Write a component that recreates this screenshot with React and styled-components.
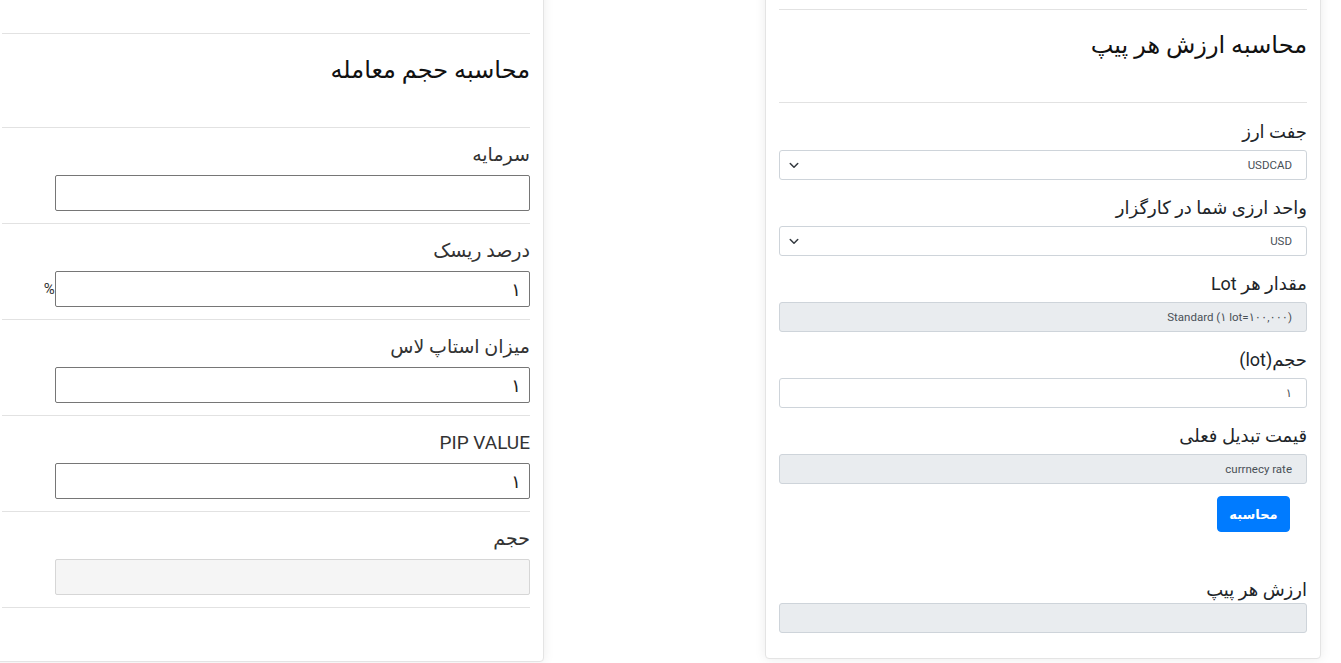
import React from "react";
import styled, { createGlobalStyle } from "styled-components";

const GlobalStyle = createGlobalStyle`
	html, body {
		margin: 0;
		padding: 0;
		background: #ffffff;
		overflow: hidden;
	}
	body {
		font-family: Roboto, "DejaVu Sans", sans-serif;
		color: #212529;
	}
	* {
		box-sizing: border-box;
	}
`;

const Page = styled.div`
	display: flow-root;
	width: 1341px;
	min-height: 663px;
	margin-left: -12px;
`;

const Columns = styled.div`
	display: flex;
	flex-direction: row;
	align-items: flex-start;
	gap: 221px;
	margin-top: -40px;
`;

const Card = styled.div`
	direction: rtl;
	width: 556px;
	padding: 0 13px ${(p) => p.$bottom}px;
	background: #ffffff;
	border: 1px solid #e4e4e4;
	border-radius: 4px;
	box-shadow: 0 0 12px rgba(0, 0, 0, 0.08);
`;

const Spacer = styled.div`
	height: ${(p) => p.$h}px;
	border-bottom: 1px solid #e2e2e2;
`;

const TitleBlock = styled.div`
	padding: ${(p) => p.$top}px 0 43px;
	border-bottom: 1px solid #e2e2e2;
`;

const Title = styled.h4`
	margin: 0;
	font-size: 24px;
	font-weight: 500;
	line-height: 28px;
	color: #111111;
`;

/* left card */

const Section = styled.div`
	padding: 13px 0 12px;
	border-bottom: 1px solid #e2e2e2;
`;

const SizeLabel = styled.label`
	display: block;
	font-size: 19px;
	line-height: 27px;
	margin-bottom: 7px;
	color: #333333;
`;

const InputRow = styled.div`
	display: flex;
	flex-direction: row;
	align-items: center;
`;

const SizeInput = styled.div`
	width: 90%;
	height: 36px;
	padding: 0 8px;
	display: flex;
	align-items: center;
	font-size: 18px;
	color: #222222;
	background: ${(p) => (p.$readonly ? "#f5f5f5" : "#ffffff")};
	border: 1px solid ${(p) => (p.$readonly ? "#d6d6d6" : "#767676")};
	border-radius: 2px;
`;

const Unit = styled.span`
	font-size: 15px;
	color: #333333;
	padding: 0 0 0 3px;
`;

/* right card */

const Form = styled.div`
	padding-top: 16px;
`;

const Field = styled.div`
	margin-bottom: 15px;
`;

const PipLabel = styled.label`
	display: block;
	font-size: 18px;
	line-height: 26px;
	margin-bottom: ${(p) => (p.$tight ? 0 : 5)}px;
	color: #212529;
`;

const Box = styled.div`
	height: 30px;
	padding: 0 14px 0 8px;
	display: flex;
	flex-direction: row;
	align-items: center;
	justify-content: space-between;
	font-size: 11.5px;
	color: #495057;
	background: ${(p) => (p.$readonly ? "#e9ecef" : "#ffffff")};
	border: 1px solid #ced4da;
	border-radius: 3px;
`;

const Chevron = styled.svg`
	width: 12px;
	height: 12px;
	color: #343a40;
`;

const ButtonRow = styled.div`
	display: flex;
	padding-right: 17px;
	margin-top: -3px;
`;

const CalcButton = styled.button`
	height: 36px;
	width: 73px;
	padding: 0;
	font-family: "DejaVu Sans", sans-serif;
	font-size: 13px;
	font-weight: bold;
	color: #ffffff;
	background: #007bff;
	border: 1px solid #007bff;
	border-radius: 4px;
`;

const ResultField = styled.div`
	margin-top: 45px;
`;

const ChevronIcon = () => (
	<Chevron viewBox="0 0 16 16" fill="none">
		<path d="M3 6l5 5 5-5" stroke="currentColor" strokeWidth="2" strokeLinecap="round" strokeLinejoin="round" />
	</Chevron>
);

const sizeFields = [
	{ label: "سرمایه", value: "" },
	{ label: "درصد ریسک", value: "١", unit: "%" },
	{ label: "میزان استاپ لاس", value: "١" },
	{ label: "PIP VALUE", value: "١" },
	{ label: "حجم", value: "", readonly: true },
];

const pipFields = [
	{ label: "جفت ارز", value: "USDCAD", select: true },
	{ label: "واحد ارزی شما در کارگزار", value: "USD", select: true },
	{ label: "مقدار هر Lot", value: "Standard (۱ lot=۱۰۰,۰۰۰)", readonly: true },
	{ label: "حجم(lot)", value: "۱" },
	{ label: "قیمت تبدیل فعلی", value: "currnecy rate", readonly: true },
];

export default function App() {
	return (
		<>
			<GlobalStyle />
			<Page>
				<Columns>
					<Card $bottom={53}>
						<Spacer $h={73} />
						<TitleBlock $top={22}>
							<Title>محاسبه حجم معامله</Title>
						</TitleBlock>
						{sizeFields.map((f) => (
							<Section key={f.label}>
								<SizeLabel>{f.label}</SizeLabel>
								<InputRow>
									<SizeInput $readonly={f.readonly}>{f.value}</SizeInput>
									{f.unit && <Unit>{f.unit}</Unit>}
								</InputRow>
							</Section>
						))}
					</Card>

					<Card $bottom={25}>
						<Spacer $h={49} />
						<TitleBlock $top={21}>
							<Title>محاسبه ارزش هر پیپ</Title>
						</TitleBlock>
						<Form>
							{pipFields.map((f) => (
								<Field key={f.label}>
									<PipLabel>{f.label}</PipLabel>
									<Box $readonly={f.readonly}>
										<span>{f.value}</span>
										{f.select && <ChevronIcon />}
									</Box>
								</Field>
							))}
							<ButtonRow>
								<CalcButton>محاسبه</CalcButton>
							</ButtonRow>
							<ResultField>
								<PipLabel $tight>ارزش هر پیپ</PipLabel>
								<Box $readonly />
							</ResultField>
						</Form>
					</Card>
				</Columns>
			</Page>
		</>
	);
}
